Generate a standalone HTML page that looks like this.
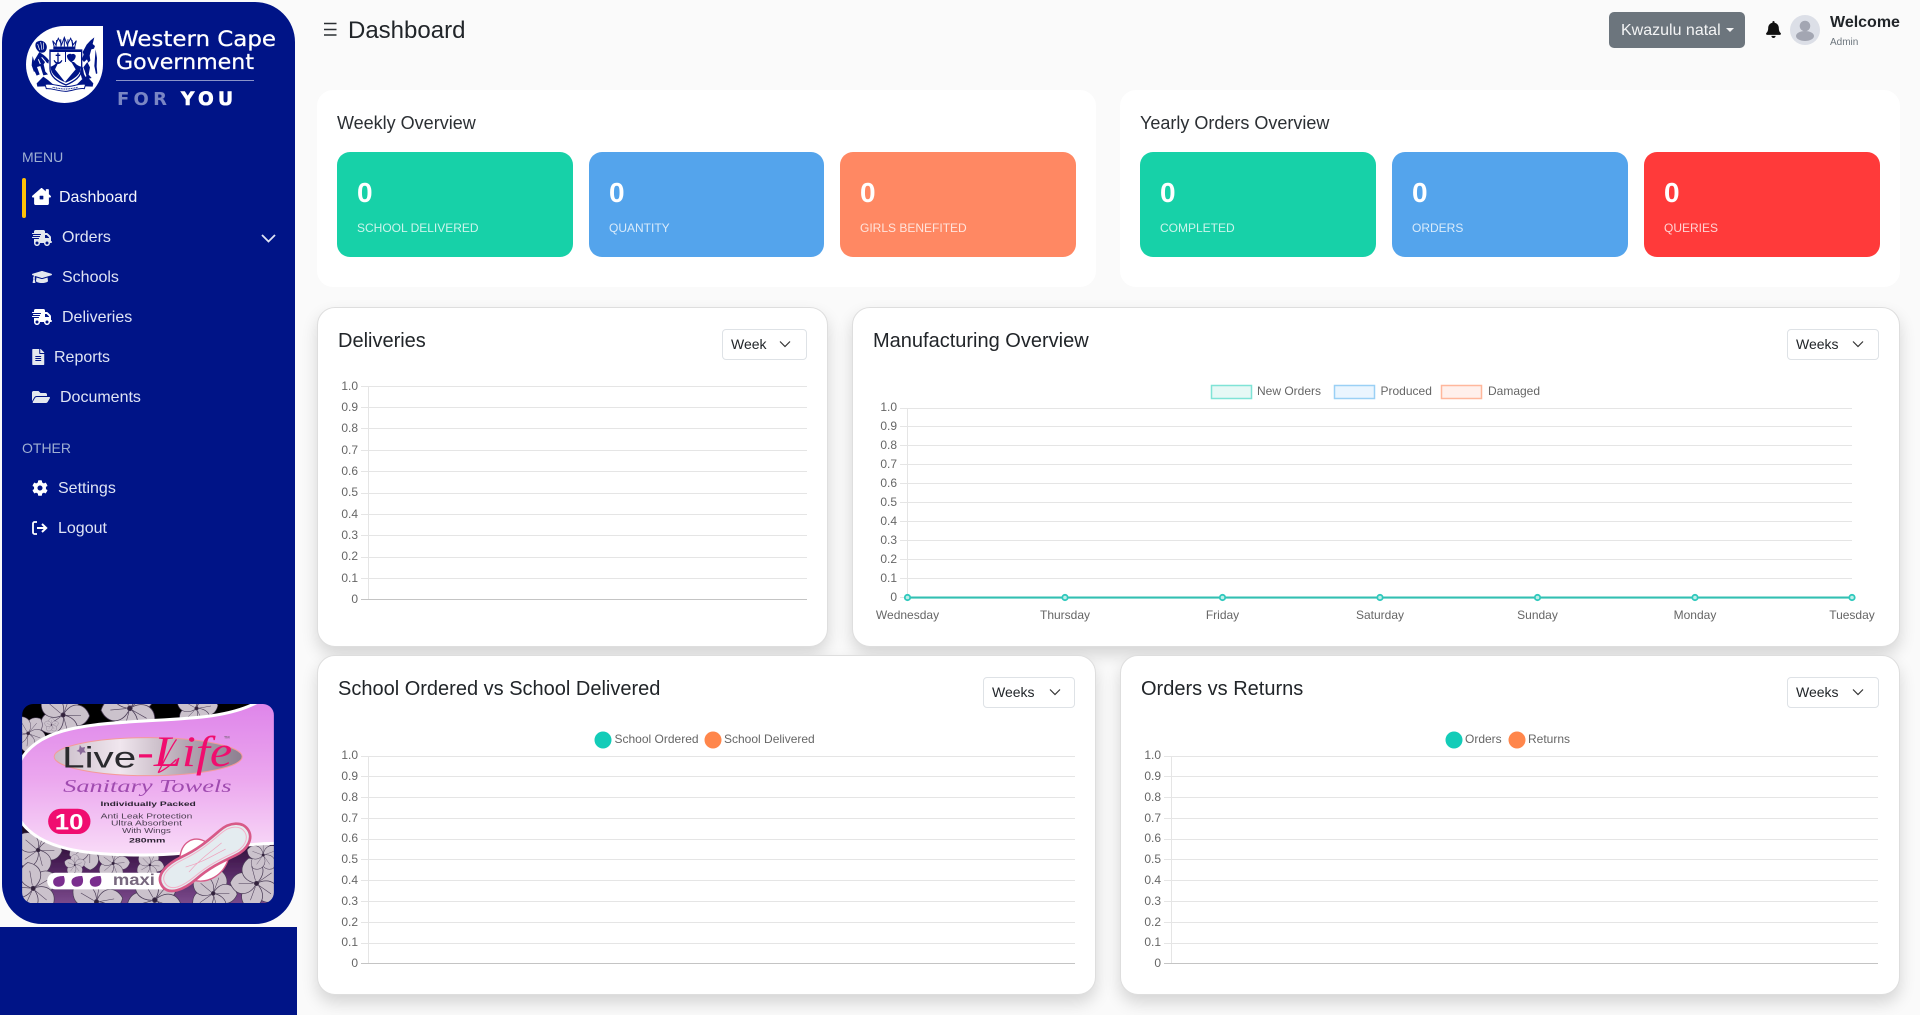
<!DOCTYPE html>
<html lang="en"><head><meta charset="utf-8"><title>Dashboard</title>
<style>
html,body{margin:0;padding:0;width:1920px;height:1015px;overflow:hidden;background:#fafafa;font-family:"Liberation Sans",sans-serif;color:#212529}
.a{position:absolute;white-space:nowrap}
.side{position:absolute;left:2px;top:2px;width:293px;height:922px;background:#001487;border-radius:40px}
.foot{position:absolute;left:0;top:927px;width:297px;height:88px;background:#001487}
.m{position:absolute;font-size:16px;line-height:20px;color:#dfe4f4;white-space:nowrap}
.h{position:absolute;font-size:14px;line-height:18px;color:#9fb0d2;left:22px}
.ic{position:absolute;fill:#e4e8ee}
.white{position:absolute;background:#fff;border-radius:16px;top:90px;height:197px}
.st{position:absolute;top:152px;height:105px;border-radius:13px;color:#fff}
.st b{position:absolute;left:20px;top:25px;font-size:28px;line-height:32px}
.st span{position:absolute;left:20px;top:69px;font-size:12px;line-height:14px;opacity:.78;white-space:nowrap}
.ttl{position:absolute;font-size:18px;line-height:22px;top:112px;color:#2b2f33}
.card{position:absolute;box-sizing:border-box;background:#fff;border:1px solid #dedede;border-radius:18px;box-shadow:0 8px 16px rgba(0,0,0,.15)}
.ct{position:absolute;font-size:20px;line-height:24px;color:#212529;white-space:nowrap}
.sel{position:absolute;box-sizing:border-box;height:31px;border:1px solid #dee2e6;border-radius:4px;background:#fff;font-size:14px;line-height:29px;color:#212529}
svg{display:block}
</style></head><body>

<div class="side"></div><div class="foot"></div>

<!-- Logo -->
<svg class="a" style="left:0;top:0" width="300" height="125" viewBox="0 0 300 125">
<path d="M103 26V64.500A38.500 38.500 0 1 1 64.500 26Z" fill="#fff"/>
<g transform="scale(.3333)" fill="#001487">
<!-- crown -->
<path d="M158 122L167 134 175 115 185 134 193 112 202 134 212 115 220 134 229 122 224 142H163Z" fill="#fff" stroke="#001487" stroke-width="3"/>
<path d="M170 120l-2 20M182 118l1 22M193 114v26M204 118l-1 22M216 120l2 20" stroke="#001487" stroke-width="3" fill="none"/>
<rect x="160" y="140" width="66" height="8"/>
<!-- shield -->
<path d="M150 150h95v56c0 24-22 38-47 49-26-11-48-25-48-49z" fill="#fff" stroke="#001487" stroke-width="4"/>
<rect x="150" y="150" width="95" height="6"/>
<rect x="195" y="152" width="3" height="34"/>
<path d="M152 200c10-3 14-8 20-14h50c6 6 10 11 21 14 0 24-20 37-45 48-26-11-46-24-46-48z"/>
<path d="M176 186h38l13 22-32 38-30-38z" fill="#fff"/>
<path d="M172 158h4v6h5v4h-5v19c4-1 7-4 8-7l3 1c-1 6-7 11-13 11s-12-5-13-11l3-1c1 3 4 6 8 7v-19h-5v-4h5z"/>
<path d="M201 166c5-5 11-6 14-3 4-3 10-1 12 4 1 7-5 15-13 20-7-5-14-12-13-21z"/>
<!-- left lion -->
<path d="M108 128c10-9 24-7 30 4 5 9 2 19-4 24-8 4-14 2-20-3-7-7-10-17-6-25z"/>
<path d="M113 132l6 18M122 126l4 24M130 128l1 20" stroke="#fff" stroke-width="2" fill="none"/>
<path d="M118 156l7 5c8 5 16 12 22 20l-2 10-9-6-5 8 5 22 8 8-14 3-9-28-10 3 8 22-9 4-13-28 4-14z"/>
<path d="M98 168l4 14-2 12 6 18-4 4-7-20 1-12z"/>
<path d="M125 172l12 14M115 178l6 14" stroke="#fff" stroke-width="3" fill="none"/>
<!-- right beast -->
<path d="M283 112l-5 20 7 6-3 8-8 2-5 18 2 16-6 6-4-10-9 8-7-8 6-14-3-8 12-22 11-12z"/>
<path d="M287 148l4 26-1 26 2 20-4 2-5-24 2-26z"/>
<path d="M262 186l8 16-4 22 9 10-13 3-8-26-4-9zM248 200l4 22 6 12-12 3-6-22z"/>
<!-- base and ribbon -->
<path d="M110 250l20-20 14 10 14 12 8 6-54 2zM280 250l-20-22-14 10-14 14-8 6 54 2z"/>
<path d="M135 253c20-4 40 6 62 7 22 0 40-10 60-7l-4 13c-18-3-36 7-56 8-22 0-42-10-58-8z" fill="#fff" stroke="#001487" stroke-width="3"/>
<path d="M158 262c12 2 24 5 38 5 14 0 26-3 38-5" stroke="#001487" stroke-width="3" stroke-dasharray="3 2" fill="none"/>
</g>
<text x="116" y="46" font-family="'DejaVu Sans',sans-serif" font-size="21" fill="#fff" stroke="#fff" stroke-width=".25" textLength="160" lengthAdjust="spacingAndGlyphs">Western Cape</text>
<text x="116" y="69" font-family="'DejaVu Sans',sans-serif" font-size="21" fill="#fff" stroke="#fff" stroke-width=".25" textLength="138" lengthAdjust="spacingAndGlyphs">Government</text>
<rect x="116" y="80" width="138" height="1" fill="#8a93c9"/>
<text x="117" y="105" font-family="'DejaVu Sans',sans-serif" font-weight="700" font-size="18" fill="#7a86c4" textLength="50" lengthAdjust="spacing">FOR</text>
<text x="181" y="105" font-family="'DejaVu Sans',sans-serif" font-weight="700" font-size="18.500" fill="#fff" stroke="#fff" stroke-width=".6" textLength="52" lengthAdjust="spacing">YOU</text>
</svg>

<!-- Sidebar nav -->
<div class="h" style="top:148px">MENU</div>
<div class="a" style="left:22px;top:178px;width:4px;height:40px;background:#ffc107;border-radius:2px"></div>

<svg class="ic" style="left:32px;top:188px;fill:#fff" width="19" height="17" viewBox="0 0 576 512"><path d="M575.800 255.500c0 18-15 32.100-32 32.100h-32l.7 160.200c0 2.700-.2 5.400-.5 8.100V472c0 22.100-17.900 40-40 40H104c-22.100 0-40-17.900-40-40V287.600H32c-18 0-32-14-32-32.100 0-9 3-17 10-24L266.400 8c7-7 15-8 22-8s15 2 21 7L416 100V56c0-13 11-24 24-24h48c13 0 24 11 24 24v130l52.800 45.500c8 7 12 15 11 24z"/><rect x="232" y="232" width="112" height="112" rx="12" fill="#001487"/></svg>
<div class="m" style="left:59px;top:188px;color:#f4f6fc">Dashboard</div>

<svg class="ic" style="left:32px;top:230px" width="20" height="16" viewBox="0 0 640 512"><path d="M112 0C85.500 0 64 21.500 64 48V96H16c-8.800 0-16 7.200-16 16s7.200 16 16 16H272c8.800 0 16 7.200 16 16s-7.200 16-16 16H48c-8.800 0-16 7.200-16 16s7.200 16 16 16H240c8.800 0 16 7.200 16 16s-7.200 16-16 16H16c-8.800 0-16 7.200-16 16s7.200 16 16 16H208c8.800 0 16 7.200 16 16s-7.200 16-16 16H64V416c0 53 43 96 96 96s96-43 96-96H384c0 53 43 96 96 96s96-43 96-96h32c17.700 0 32-14.300 32-32s-14.300-32-32-32V237.300c0-17-6.700-33.300-18.700-45.300L512 114.700c-12-12-28.300-18.700-45.300-18.700H416V48c0-26.500-21.500-48-48-48H112zM544 237.300V256H416V160h50.700L544 237.300zM160 368a48 48 0 1 1 0 96 48 48 0 1 1 0-96zm272 48a48 48 0 1 1 96 0 48 48 0 1 1-96 0z"/></svg>
<div class="m" style="left:62px;top:228px">Orders</div>
<svg class="a" style="left:261px;top:234px" width="15" height="9" viewBox="0 0 15 9"><path d="M1 1l6.500 6.500L14 1" fill="none" stroke="#dfe4f4" stroke-width="1.800"/></svg>

<svg class="ic" style="left:32px;top:269px" width="20" height="16" viewBox="0 0 640 512"><path d="M622.340 153.200L343.400 67.500c-15.200-4.670-31.600-4.670-46.790 0L17.660 153.200c-23.540 7.230-23.540 38.360 0 45.590l48.630 14.940c-10.670 13.190-17.230 29.280-17.880 46.900C38.780 266.150 32 276.110 32 288c0 10.780 5.680 19.850 13.860 25.650L20.330 428.530C18.110 438.520 25.710 448 35.940 448h56.110c10.240 0 17.840-9.480 15.620-19.470L82.140 313.650C90.320 307.850 96 298.780 96 288c0-11.570-6.470-21.250-15.660-26.870.76-15.020 8.440-28.300 20.690-36.720L296.600 284.500c9.060 2.780 26.440 6.250 46.790 0l278.950-85.700c23.550-7.240 23.550-38.360 0-45.600zM352.790 315.090c-28.530 8.760-52.840 3.920-65.590 0l-145.020-44.550L128 384c0 35.350 85.960 64 192 64s192-28.650 192-64l-14.180-113.470-145.030 44.560z"/></svg>
<div class="m" style="left:62px;top:268px">Schools</div>

<svg class="ic" style="left:32px;top:309px;fill:#fff" width="20" height="16" viewBox="0 0 640 512"><path d="M112 0C85.500 0 64 21.500 64 48V96H16c-8.800 0-16 7.200-16 16s7.200 16 16 16H272c8.800 0 16 7.200 16 16s-7.200 16-16 16H48c-8.800 0-16 7.200-16 16s7.200 16 16 16H240c8.800 0 16 7.200 16 16s-7.200 16-16 16H16c-8.800 0-16 7.200-16 16s7.200 16 16 16H208c8.800 0 16 7.200 16 16s-7.200 16-16 16H64V416c0 53 43 96 96 96s96-43 96-96H384c0 53 43 96 96 96s96-43 96-96h32c17.700 0 32-14.300 32-32s-14.300-32-32-32V237.300c0-17-6.700-33.300-18.700-45.300L512 114.700c-12-12-28.300-18.700-45.300-18.700H416V48c0-26.500-21.500-48-48-48H112zM544 237.300V256H416V160h50.700L544 237.300zM160 368a48 48 0 1 1 0 96 48 48 0 1 1 0-96zm272 48a48 48 0 1 1 96 0 48 48 0 1 1-96 0z"/></svg>
<div class="m" style="left:62px;top:308px">Deliveries</div>

<svg class="ic" style="left:32px;top:349px" width="12.500" height="16" viewBox="0 0 384 512"><path d="M224 136V0H24C10.700 0 0 10.700 0 24v464c0 13.300 10.700 24 24 24h336c13.300 0 24-10.700 24-24V160H248c-13.200 0-24-10.800-24-24zm64 236c0 6.600-5.400 12-12 12H108c-6.600 0-12-5.400-12-12v-8c0-6.600 5.400-12 12-12h168c6.600 0 12 5.400 12 12v8zm0-64c0 6.600-5.400 12-12 12H108c-6.600 0-12-5.400-12-12v-8c0-6.600 5.400-12 12-12h168c6.600 0 12 5.400 12 12v8zm0-72v8c0 6.600-5.400 12-12 12H108c-6.600 0-12-5.400-12-12v-8c0-6.600 5.400-12 12-12h168c6.600 0 12 5.400 12 12zm96-114.100v6.100H256V0h6.100c6.400 0 12.500 2.500 17 7l97.900 98c4.500 4.500 7 10.600 7 16.900z"/></svg>
<div class="m" style="left:54px;top:348px">Reports</div>

<svg class="ic" style="left:32px;top:389px" width="18" height="16" viewBox="0 0 576 512"><path d="M572.694 292.093L500.270 416.248A63.997 63.997 0 0 1 444.989 448H45.025c-18.523 0-30.064-20.093-20.731-36.093l72.424-124.155A64 64 0 0 1 152 256h399.964c18.523 0 30.064 20.093 20.730 36.093zM152 224h328v-48c0-26.510-21.490-48-48-48H272l-64-64H48C21.490 64 0 85.490 0 112v278.046l69.077-118.418C86.214 242.250 117.989 224 152 224z"/></svg>
<div class="m" style="left:60px;top:388px">Documents</div>

<div class="h" style="top:439px">OTHER</div>

<svg class="ic" style="left:32px;top:480px;fill:#fff" width="16" height="16" viewBox="0 0 512 512"><path d="M487.400 315.700l-42.600-24.600c4.300-23.200 4.300-47 0-70.200l42.600-24.600c4.900-2.800 7.100-8.600 5.500-14-11.100-35.600-30-67.800-54.700-94.600-3.800-4.100-10-5.100-14.800-2.300L380.800 110c-17.900-15.400-38.500-27.300-60.800-35.100V25.800c0-5.600-3.900-10.500-9.400-11.700-36.700-8.200-74.300-7.800-109.200 0-5.500 1.200-9.400 6.100-9.400 11.700V75c-22.200 7.900-42.800 19.800-60.800 35.100L88.700 85.500c-4.900-2.800-11-1.900-14.800 2.300-24.700 26.700-43.600 58.900-54.700 94.600-1.700 5.400.6 11.200 5.500 14L67.300 221c-4.300 23.200-4.300 47 0 70.200l-42.600 24.600c-4.900 2.800-7.100 8.600-5.500 14 11.100 35.600 30 67.800 54.700 94.600 3.800 4.100 10 5.100 14.800 2.300l42.600-24.600c17.900 15.400 38.500 27.300 60.800 35.100v49.200c0 5.600 3.900 10.500 9.400 11.700 36.700 8.200 74.300 7.800 109.200 0 5.500-1.200 9.400-6.100 9.400-11.700v-49.200c22.200-7.900 42.800-19.800 60.800-35.100l42.600 24.600c4.900 2.800 11 1.900 14.800-2.300 24.700-26.700 43.600-58.900 54.700-94.600 1.500-5.500-.7-11.300-5.600-14.100zM256 336c-44.100 0-80-35.900-80-80s35.900-80 80-80 80 35.900 80 80-35.900 80-80 80z"/></svg>
<div class="m" style="left:58px;top:479px">Settings</div>

<svg class="a" style="left:32px;top:521px" width="16" height="14" viewBox="0 0 16 14"><path d="M5 1H2.500C1.700 1 1 1.700 1 2.500v9C1 12.300 1.700 13 2.500 13H5" fill="none" stroke="#fff" stroke-width="1.800"/><path d="M5 7h9M10 3l4.200 4L10 11" fill="none" stroke="#fff" stroke-width="2"/></svg>
<div class="m" style="left:58px;top:519px">Logout</div>

<!-- Product -->
<svg class="a" style="left:22px;top:704px" width="252" height="199.400" viewBox="67 72 755 598">
<defs>
<clipPath id="pc"><rect x="67" y="72" width="755" height="598" rx="33"/></clipPath>
<linearGradient id="pk" x1="0" y1="0" x2="0" y2="1"><stop offset="0" stop-color="#de84ea"/><stop offset=".5" stop-color="#eba6ee"/><stop offset="1" stop-color="#f9dcf8"/></linearGradient>
<linearGradient id="dk" x1="0" y1="0" x2="0" y2="1"><stop offset="0" stop-color="#000"/><stop offset=".6" stop-color="#150518"/><stop offset=".8" stop-color="#4a2058"/><stop offset="1" stop-color="#7b4a8c"/></linearGradient>
<linearGradient id="el" x1="0" y1="0" x2="1" y2="0"><stop offset="0" stop-color="#c9bcc8"/><stop offset=".35" stop-color="#f0e6ee"/><stop offset=".7" stop-color="#b4a6b2"/><stop offset="1" stop-color="#8c7f90"/></linearGradient>
<filter id="bl"><feGaussianBlur stdDeviation="1"/></filter>
<g id="fl" fill="#cbc2cc" stroke="#4a3c56" stroke-width="2"><path d="M0 0C-38-18-38-58 0-72 38-58 38-18 0 0Z"/><path d="M0 0C-38-18-38-58 0-72 38-58 38-18 0 0Z" transform="rotate(72)"/><path d="M0 0C-38-18-38-58 0-72 38-58 38-18 0 0Z" transform="rotate(144)"/><path d="M0 0C-38-18-38-58 0-72 38-58 38-18 0 0Z" transform="rotate(216)"/><path d="M0 0C-38-18-38-58 0-72 38-58 38-18 0 0Z" transform="rotate(288)"/><path d="M0-8V-50M8 -2L46-16M5 7L28 40M-5 7L-28 40M-8 -2L-46-16" fill="none" stroke-width="1.500"/><circle r="6" fill="#30203a"/></g>
</defs>
<g clip-path="url(#pc)" filter="url(#bl)">
<rect x="67" y="72" width="755" height="598" fill="url(#dk)"/>
<use href="#fl" transform="translate(190 105) scale(1.100) rotate(20)"/>
<use href="#fl" transform="translate(390 85) scale(1.200) rotate(50)"/>
<use href="#fl" transform="translate(590 85) scale(.9) rotate(10)"/>
<use href="#fl" transform="translate(85 160) scale(.8) rotate(40)"/>
<use href="#fl" transform="translate(155 135) scale(.3)"/>
<use href="#fl" transform="translate(115 510) scale(1) rotate(20)"/>
<use href="#fl" transform="translate(100 625) scale(1.100) rotate(60)"/>
<use href="#fl" transform="translate(270 505) scale(.9) rotate(35)"/>
<use href="#fl" transform="translate(225 555) scale(.45)"/>
<use href="#fl" transform="translate(340 550) scale(.7) rotate(15)"/>
<use href="#fl" transform="translate(450 555) scale(.6) rotate(25)"/>
<use href="#fl" transform="translate(290 665) scale(1.100) rotate(10)"/>
<use href="#fl" transform="translate(465 660) scale(1.200) rotate(40)"/>
<use href="#fl" transform="translate(640 640) scale(1) rotate(20)"/>
<use href="#fl" transform="translate(770 610) scale(1.100) rotate(55)"/>
<use href="#fl" transform="translate(790 525) scale(.7)"/>
<path d="M60 245C110 150 240 135 400 125 560 115 680 115 770 68L830 60V490C700 490 600 525 430 525 260 525 120 510 60 420Z" fill="url(#pk)" stroke="#fff" stroke-width="9"/>
<ellipse cx="445" cy="230" rx="282" ry="57" fill="url(#el)" stroke="#f49a9a" stroke-width="3"/>
<path d="M240 195l6 8 10-2-3 9 5 8-10-1-6 8-3-9-9-3 8-5z" fill="#8a6a9a"/>
<text x="187" y="262" font-family="'Liberation Sans',sans-serif" font-size="90" fill="#2a2a2e" textLength="222" lengthAdjust="spacingAndGlyphs">Live</text>
<text x="412" y="258" font-family="'Liberation Serif',serif" font-style="italic" font-size="130" fill="#f0106e" textLength="285" lengthAdjust="spacingAndGlyphs">-Life</text>
<path d="M530 178c-18 25-40 70-55 100M475 278c20-8 45-30 55-40" fill="none" stroke="#f0106e" stroke-width="4"/>
<text x="672" y="176" font-family="'Liberation Sans',sans-serif" font-size="12" fill="#555">TM</text>
<text x="190" y="336" font-family="'Liberation Serif',serif" font-style="italic" font-size="54" fill="#a04cb0" textLength="505" lengthAdjust="spacingAndGlyphs">Sanitary Towels</text>
<text x="445" y="378" text-anchor="middle" font-family="'Liberation Sans',sans-serif" font-weight="700" font-size="20" fill="#2a2230" textLength="286" lengthAdjust="spacingAndGlyphs">Individually Packed</text>
<rect x="145" y="386" width="127" height="76" rx="38" fill="#f00a70"/>
<text x="208" y="448" text-anchor="middle" font-family="'Liberation Sans',sans-serif" font-weight="700" font-size="66" fill="#fff" textLength="86" lengthAdjust="spacingAndGlyphs">10</text>
<g font-family="'Liberation Sans',sans-serif" fill="#4a3e50" text-anchor="middle"><text x="440" y="416" font-size="22" textLength="275" lengthAdjust="spacingAndGlyphs">Anti Leak Protection</text><text x="440" y="437" font-size="22" textLength="213" lengthAdjust="spacingAndGlyphs">Ultra Absorbent</text><text x="440" y="459" font-size="22" textLength="146" lengthAdjust="spacingAndGlyphs">With Wings</text><text x="442" y="487" font-weight="700" font-size="20" fill="#2a2230" textLength="109" lengthAdjust="spacingAndGlyphs">280mm</text></g>
<rect x="142" y="578" width="380" height="50" rx="25" fill="#fff"/>
<g fill="#7a2f8e"><path d="M160 605C160 592 176 588 192 588 197 600 197 620 176 620 166 620 160 614 160 605Z"/><path d="M215 605C215 592 231 588 247 588 252 600 252 620 231 620 221 620 215 614 215 605Z"/><path d="M270 605C270 592 286 588 302 588 307 600 307 620 286 620 276 620 270 614 270 605Z"/></g>
<text x="339" y="615" font-family="'Liberation Sans',sans-serif" font-weight="700" font-size="48" fill="#77677e" textLength="126" lengthAdjust="spacingAndGlyphs">maxi</text>
<g transform="translate(612 535) rotate(-33)">
<path d="M-60-40C-30-78 10-75 30-42L60 42C20 75-30 70-60 40Z" fill="#fff" stroke="#d85a88" stroke-width="4"/>
<path d="M-150 0C-150-38-100-46-55-40 0-32 40-38 85-44 125-50 158-30 158 0S125 50 85 44C40 38 0 32-55 40-100 46-150 38-150 0Z" fill="#e4ecf0" stroke="#d85a88" stroke-width="8"/>
<path d="M-138 0C-138-30-100-36-55-31 0-24 40-29 85-35 120-40 146-24 146 0S120 40 85 35C40 29 0 24-55 31-100 36-138 30-138 0Z" fill="none" stroke="#f4b0c8" stroke-width="3"/>
<path d="M-60 10C-10 -5 30 -5 70 -10M-60 -8C-10 8 30 8 70 12" fill="none" stroke="#f0a0bc" stroke-width="2"/>
</g>
</g>
</svg>

<!-- Header -->
<svg class="a" style="left:324px;top:22px" width="13" height="15" viewBox="0 0 13 15"><path d="M0 1.500h12.500M0 7.500h12.500M0 13h12.500" stroke="#2b2f33" stroke-width="1.400"/></svg>
<div class="a" style="left:348px;top:17px;font-size:24px;line-height:28px;color:#212529">Dashboard</div>
<div class="a" style="left:1609px;top:12px;width:136px;height:36px;background:#6c757d;border-radius:5px"></div>
<div class="a" style="left:1621px;top:21px;font-size:16px;line-height:19px;color:#f3f4f5">Kwazulu natal</div>
<div class="a" style="left:1726px;top:28px;width:0;height:0;border-left:4px solid transparent;border-right:4px solid transparent;border-top:4px solid #f3f4f5"></div>
<svg class="a" style="left:1766px;top:21px" width="15" height="17" viewBox="0 0 448 512"><path fill="#111" d="M224 512c35.320 0 63.970-28.650 63.970-64H160.030c0 35.350 28.650 64 63.970 64zm215.390-149.710c-19.320-20.760-55.470-51.990-55.470-154.290 0-77.700-54.480-139.900-127.940-155.160V32c0-17.670-14.320-32-31.980-32s-31.980 14.330-31.980 32v20.840C118.560 68.100 64.080 130.300 64.080 208c0 102.300-36.150 133.530-55.470 154.290-6 6.450-8.660 14.160-8.610 21.710.11 16.400 12.980 32 32.100 32h383.800c19.120 0 32-15.600 32.100-32 .05-7.550-2.610-15.260-8.610-21.710z"/></svg>
<svg class="a" style="left:1790px;top:15px" width="30" height="30" viewBox="0 0 30 30"><circle cx="15" cy="15" r="15" fill="#dcdfe7"/><circle cx="15" cy="11" r="5.300" fill="#a3a6b2"/><ellipse cx="15" cy="21" rx="9" ry="5" fill="#a3a6b2"/></svg>
<div class="a" style="left:1830px;top:13px;font-size:16px;line-height:19px;font-weight:700;color:#212529">Welcome</div>
<div class="a" style="left:1830px;top:37px;font-size:10px;line-height:12px;color:#6c757d">Admin</div>

<!-- Overview cards -->
<div class="white" style="left:317px;width:779px"></div>
<div class="white" style="left:1120px;width:780px"></div>
<div class="ttl" style="left:337px">Weekly Overview</div>
<div class="ttl" style="left:1140px">Yearly Orders Overview</div>
<div class="st" style="left:337px;width:236px;background:#17d1a8"><b>0</b><span>SCHOOL DELIVERED</span></div>
<div class="st" style="left:589px;width:235px;background:#54a4ec"><b>0</b><span>QUANTITY</span></div>
<div class="st" style="left:840px;width:236px;background:#ff8863"><b>0</b><span>GIRLS BENEFITED</span></div>
<div class="st" style="left:1140px;width:236px;background:#17d1a8"><b>0</b><span>COMPLETED</span></div>
<div class="st" style="left:1392px;width:236px;background:#54a4ec"><b>0</b><span>ORDERS</span></div>
<div class="st" style="left:1644px;width:236px;background:#ff3a3a"><b>0</b><span>QUERIES</span></div>

<!-- Chart cards -->
<div class="card" style="left:317px;top:307px;width:511px;height:340px"></div>
<div class="card" style="left:852px;top:307px;width:1048px;height:340px"></div>
<div class="card" style="left:317px;top:655px;width:779px;height:340px"></div>
<div class="card" style="left:1120px;top:655px;width:780px;height:340px"></div>

<div class="ct" style="left:338px;top:329px">Deliveries</div>
<div class="ct" style="left:873px;top:329px">Manufacturing Overview</div>
<div class="ct" style="left:338px;top:677px">School Ordered vs School Delivered</div>
<div class="ct" style="left:1141px;top:677px">Orders vs Returns</div>

<div class="sel" style="left:722px;top:329px;width:85px;padding-left:8px">Week</div>
<div class="sel" style="left:1787px;top:329px;width:92px;padding-left:8px">Weeks</div>
<div class="sel" style="left:983px;top:677px;width:92px;padding-left:8px">Weeks</div>
<div class="sel" style="left:1787px;top:677px;width:92px;padding-left:8px">Weeks</div>

<svg class="a" style="left:0;top:0" width="1920" height="1015" viewBox="0 0 1920 1015" font-family="'Liberation Sans',sans-serif" font-size="12" fill="#666">
<g fill="none" stroke="#333" stroke-width="1.200"><path d="M780 341.500l5 5 5-5M1853 341.500l5 5 5-5M1050 689.500l5 5 5-5M1853 689.500l5 5 5-5"/></g>

<!-- Chart 1 -->
<g stroke="#e5e5e5"><path d="M368.500 386V600"/>
<path d="M361 386.500H807M361 407.500H807M361 428.500H807M361 450.500H807M361 471.500H807M361 493.500H807M361 514.500H807M361 535.500H807M361 557.500H807M361 578.500H807"/></g>
<path d="M361 599.500H807" stroke="#c4c4c4"/>
<g text-anchor="end"><text x="358" y="390">1.0</text><text x="358" y="411">0.9</text><text x="358" y="432">0.8</text><text x="358" y="454">0.7</text><text x="358" y="475">0.6</text><text x="358" y="496">0.5</text><text x="358" y="518">0.4</text><text x="358" y="539">0.3</text><text x="358" y="560">0.2</text><text x="358" y="582">0.1</text><text x="358" y="603">0</text></g>

<!-- Chart 2 -->
<rect x="1211.500" y="385.500" width="40" height="13" fill="#e6f8f5" stroke="#7fe3d6" stroke-width="1.500"/>
<rect x="1334.500" y="385.500" width="40" height="13" fill="#eaf5fe" stroke="#9ad0f5" stroke-width="1.500"/>
<rect x="1441.500" y="385.500" width="40" height="13" fill="#fff0ec" stroke="#ffb79c" stroke-width="1.500"/>
<text x="1257" y="395">New Orders</text><text x="1380.500" y="395">Produced</text><text x="1488" y="395">Damaged</text>
<g stroke="#e5e5e5"><path d="M907.500 408V598"/>
<path d="M900 408.500H1852M900 426.500H1852M900 445.500H1852M900 464.500H1852M900 483.500H1852M900 502.500H1852M900 521.500H1852M900 540.500H1852M900 559.500H1852M900 578.500H1852M900 597.500H907"/></g>
<g text-anchor="end"><text x="897" y="411">1.0</text><text x="897" y="430">0.9</text><text x="897" y="449">0.8</text><text x="897" y="468">0.7</text><text x="897" y="487">0.6</text><text x="897" y="506">0.5</text><text x="897" y="525">0.4</text><text x="897" y="544">0.3</text><text x="897" y="563">0.2</text><text x="897" y="582">0.1</text><text x="897" y="601">0</text></g>
<path d="M907.500 598.500H1852" stroke="#d6f5f0" stroke-width="1"/>
<path d="M907.500 597.500H1852" stroke="#33bfb2" stroke-width="2"/>
<g fill="#bfeee8" stroke="#2fc9bd" stroke-width="1.800"><circle cx="907.500" cy="597.500" r="2.700"/><circle cx="1065" cy="597.500" r="2.700"/><circle cx="1222.500" cy="597.500" r="2.700"/><circle cx="1380" cy="597.500" r="2.700"/><circle cx="1537.500" cy="597.500" r="2.700"/><circle cx="1695" cy="597.500" r="2.700"/><circle cx="1852" cy="597.500" r="2.700"/></g>
<g text-anchor="middle"><text x="907.500" y="619">Wednesday</text><text x="1065" y="619">Thursday</text><text x="1222.500" y="619">Friday</text><text x="1380" y="619">Saturday</text><text x="1537.500" y="619">Sunday</text><text x="1695" y="619">Monday</text><text x="1852" y="619">Tuesday</text></g>

<!-- Chart 3 -->
<circle cx="603" cy="740" r="8.500" fill="#13ccb8"/><circle cx="713" cy="740" r="8.500" fill="#ff864b"/>
<text x="614.500" y="743">School Ordered</text><text x="724" y="743">School Delivered</text>
<g stroke="#e5e5e5"><path d="M368.500 756V964"/>
<path d="M361 756.500H1075M361 776.500H1075M361 797.500H1075M361 818.500H1075M361 839.500H1075M361 859.500H1075M361 880.500H1075M361 901.500H1075M361 922.500H1075M361 943.500H1075"/></g>
<path d="M361 963.500H1075" stroke="#c4c4c4"/>
<g text-anchor="end"><text x="358" y="759">1.0</text><text x="358" y="780">0.9</text><text x="358" y="801">0.8</text><text x="358" y="822">0.7</text><text x="358" y="842">0.6</text><text x="358" y="863">0.5</text><text x="358" y="884">0.4</text><text x="358" y="905">0.3</text><text x="358" y="926">0.2</text><text x="358" y="946">0.1</text><text x="358" y="967">0</text></g>

<!-- Chart 4 -->
<circle cx="1454" cy="740" r="8.500" fill="#13ccb8"/><circle cx="1517" cy="740" r="8.500" fill="#ff864b"/>
<text x="1465" y="743">Orders</text><text x="1528" y="743">Returns</text>
<g stroke="#e5e5e5"><path d="M1171.500 756V964"/>
<path d="M1164 756.500H1878M1164 776.500H1878M1164 797.500H1878M1164 818.500H1878M1164 839.500H1878M1164 859.500H1878M1164 880.500H1878M1164 901.500H1878M1164 922.500H1878M1164 943.500H1878"/></g>
<path d="M1164 963.500H1878" stroke="#c4c4c4"/>
<g text-anchor="end"><text x="1161" y="759">1.0</text><text x="1161" y="780">0.9</text><text x="1161" y="801">0.8</text><text x="1161" y="822">0.7</text><text x="1161" y="842">0.6</text><text x="1161" y="863">0.5</text><text x="1161" y="884">0.4</text><text x="1161" y="905">0.3</text><text x="1161" y="926">0.2</text><text x="1161" y="946">0.1</text><text x="1161" y="967">0</text></g>
</svg>
</body></html>
